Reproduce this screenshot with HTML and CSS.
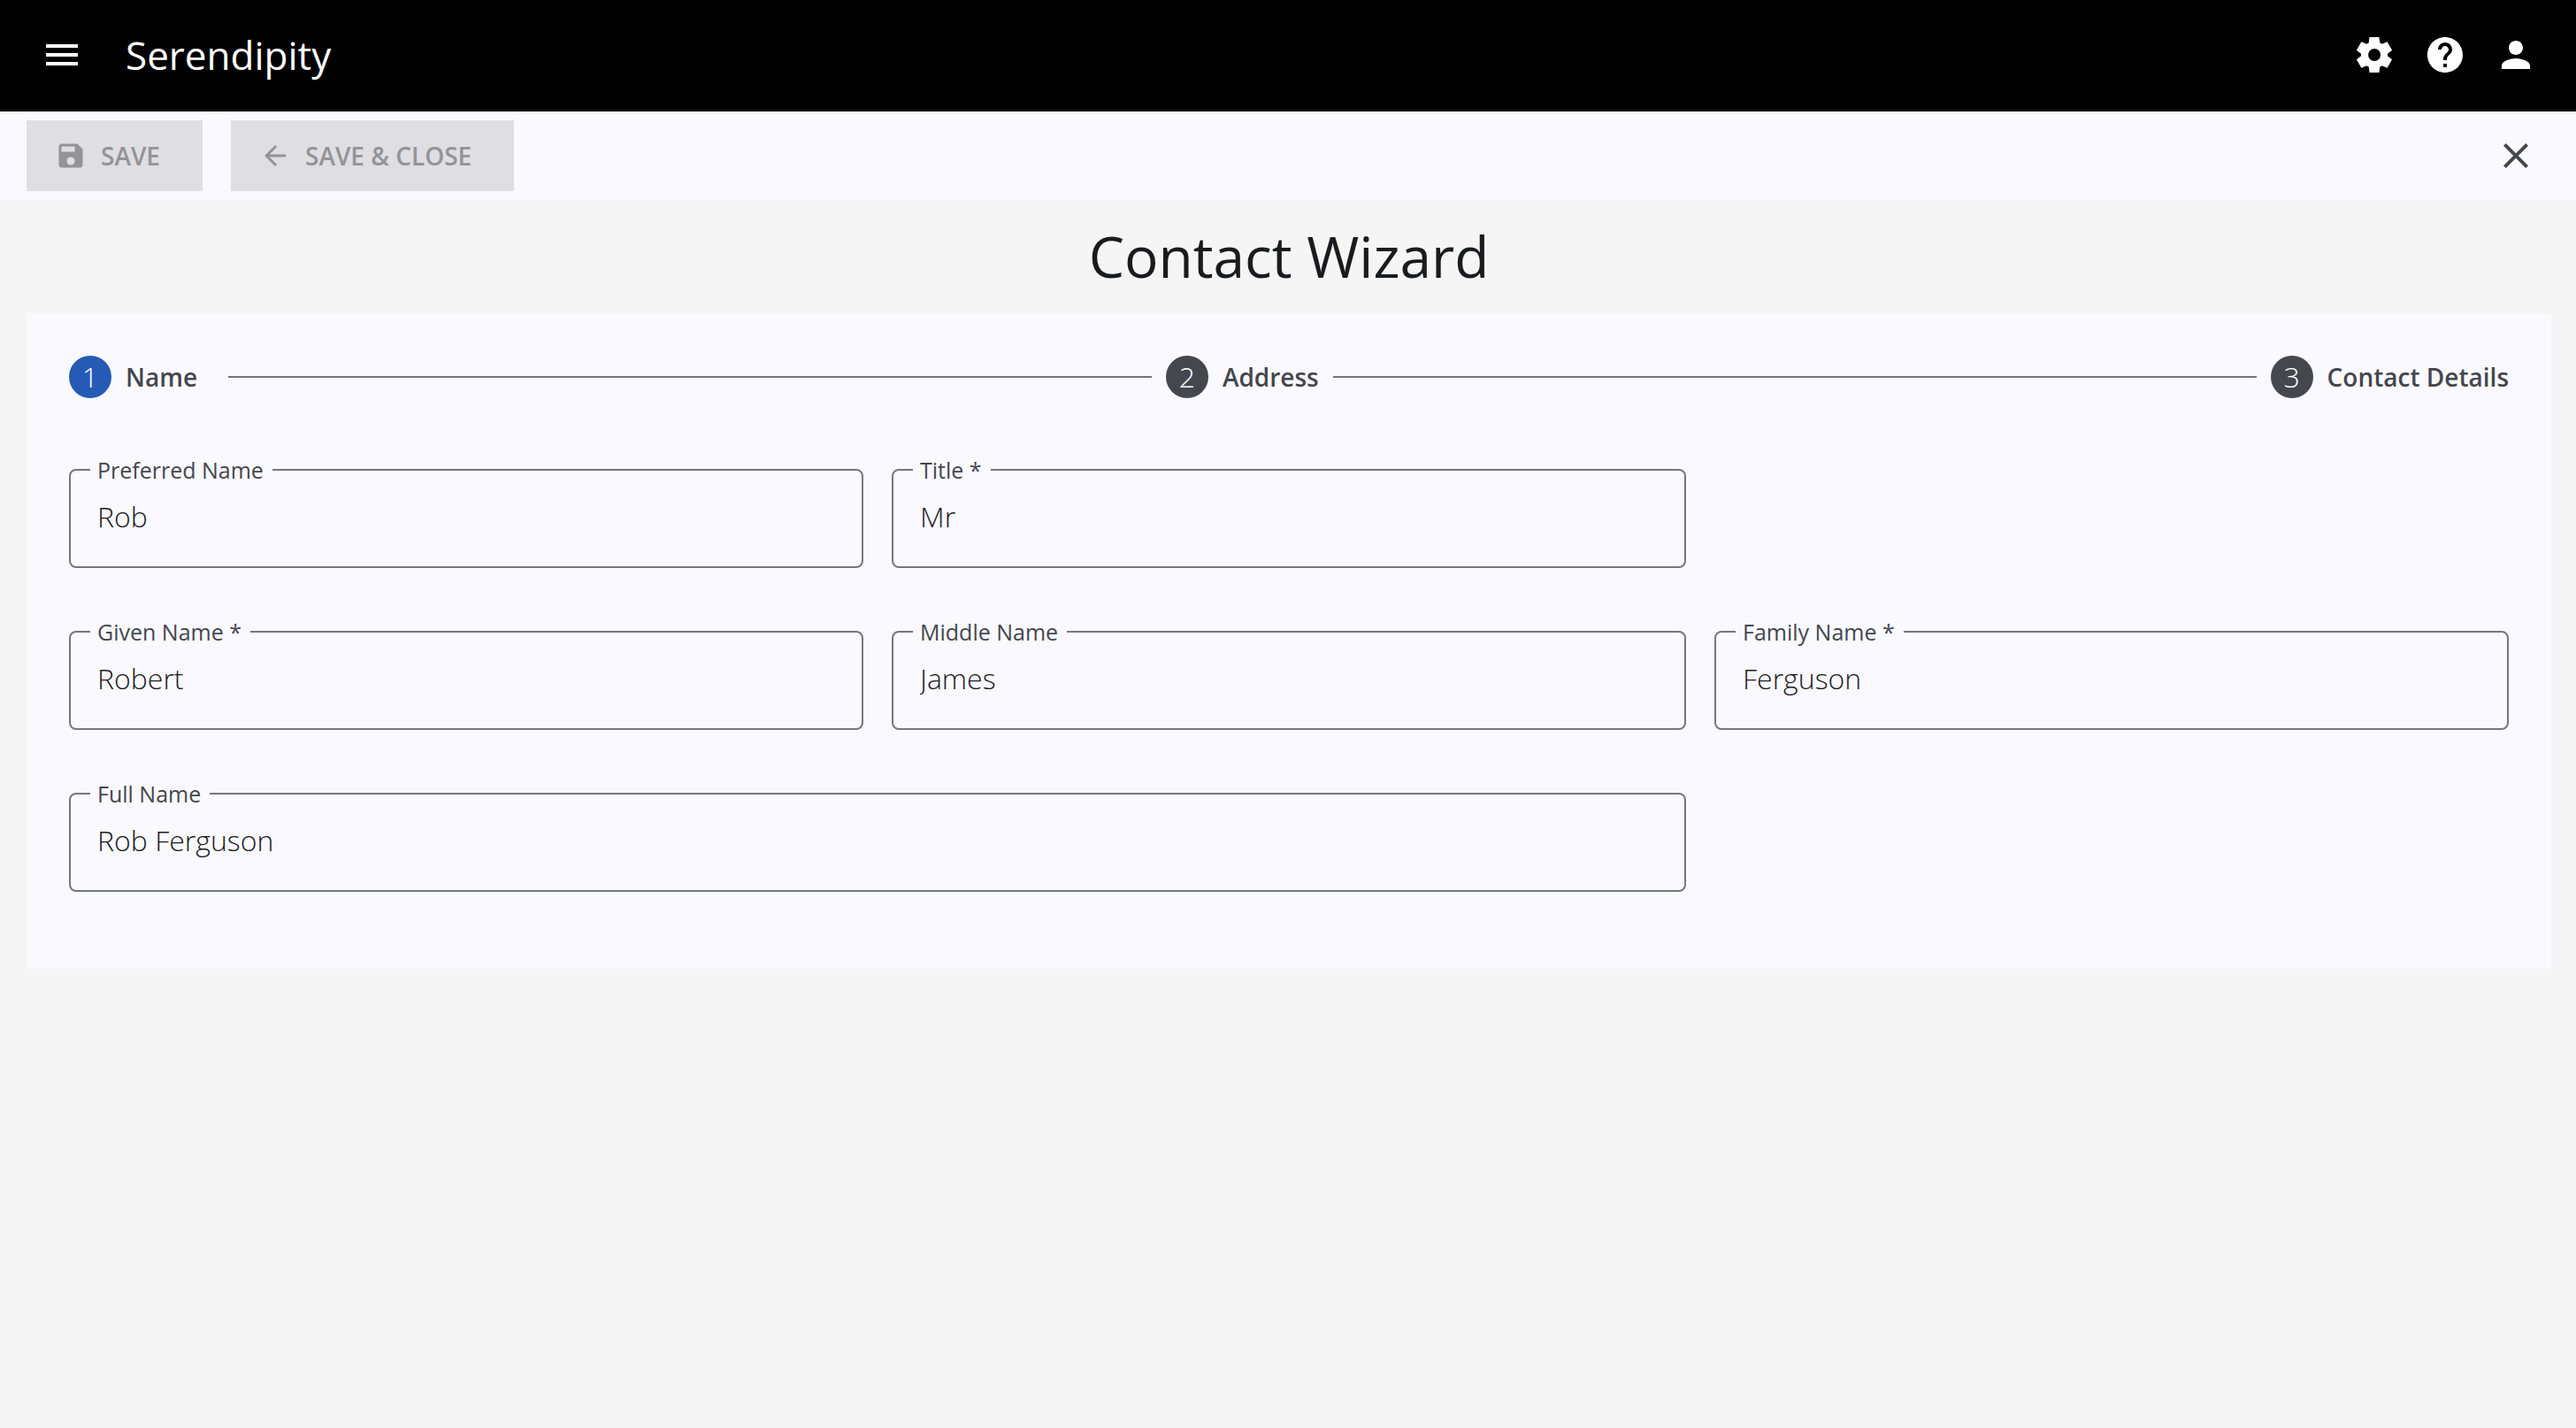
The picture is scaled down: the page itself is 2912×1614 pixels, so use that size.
FILE: index.html
```html
<!DOCTYPE html>
<html lang="en">
<head>
<meta charset="utf-8">
<meta name="viewport" content="width=device-width, initial-scale=1">
<title>Serendipity</title>
<link rel="stylesheet" href="styles.css">
</head>
<body>
<header class="app-bar">
  <button class="icon-button" type="button" aria-label="Menu">
    <svg class="icon" viewBox="0 0 24 24"><path d="M3 18h18v-2H3v2zm0-5h18v-2H3v2zm0-7v2h18V6H3z"/></svg>
  </button>
  <span class="brand">Serendipity</span>
  <nav class="actions">
    <button class="icon-button" type="button" aria-label="Settings">
      <svg class="icon" viewBox="0 0 24 24"><path d="m9.25 22-.4-3.2q-.325-.125-.612-.3-.288-.175-.563-.375L4.7 19.375l-2.75-4.75 2.575-1.95Q4.5 12.5 4.5 12.337v-.675q0-.162.025-.337L1.95 9.375l2.75-4.75 2.975 1.25q.275-.2.575-.375.3-.175.6-.3l.4-3.2h5.5l.4 3.2q.325.125.613.3.287.175.562.375l2.975-1.25 2.75 4.75-2.575 1.95q.025.175.025.337v.675q0 .163-.05.338l2.575 1.95-2.75 4.75-2.95-1.25q-.275.2-.575.375-.3.175-.6.3l-.4 3.2Zm2.8-6.5q1.45 0 2.475-1.025Q15.55 13.45 15.55 12q0-1.45-1.025-2.475Q13.5 8.5 12.05 8.5q-1.475 0-2.488 1.025Q8.55 10.55 8.55 12q0 1.45 1.012 2.475Q10.575 15.5 12.05 15.5Z"/></svg>
    </button>
    <button class="icon-button" type="button" aria-label="Help">
      <svg class="icon" viewBox="0 0 24 24"><path d="M12 2C6.480 2 2 6.480 2 12s4.480 10 10 10 10-4.480 10-10S17.520 2 12 2zm1 17h-2v-2h2v2zm2.070-7.750l-.9.920C13.450 12.900 13 13.500 13 15h-2v-.5c0-1.100.450-2.100 1.170-2.830l1.240-1.260c.370-.360.590-.860.590-1.410 0-1.100-.9-2-2-2s-2 .9-2 2H8c0-2.210 1.790-4 4-4s4 1.790 4 4c0 .880-.360 1.680-.930 2.250z"/></svg>
    </button>
    <button class="icon-button" type="button" aria-label="Account">
      <svg class="icon" viewBox="0 0 24 24"><path d="M12 12c2.210 0 4-1.790 4-4s-1.790-4-4-4-4 1.790-4 4 1.790 4 4 4zm0 2c-2.670 0-8 1.340-8 4v2h16v-2c0-2.660-5.330-4-8-4z"/></svg>
    </button>
  </nav>
</header>

<div class="toolbar">
  <button class="command" type="button" disabled>
    <svg class="command-icon" viewBox="0 0 24 24"><path d="M17 3H5c-1.110 0-2 .9-2 2v14c0 1.100.890 2 2 2h14c1.100 0 2-.9 2-2V7l-4-4zm-5 16c-1.660 0-3-1.340-3-3s1.340-3 3-3 3 1.340 3 3-1.340 3-3 3zm3-10H5V5h10v4z"/></svg>
    SAVE
  </button>
  <button class="command" type="button" disabled>
    <svg class="command-icon" viewBox="0 0 24 24"><path d="M20 11H7.830l5.590-5.590L12 4l-8 8 8 8 1.410-1.410L7.830 13H20v-2z"/></svg>
    SAVE &amp; CLOSE
  </button>
  <button class="icon-button close" type="button" aria-label="Close">
    <svg class="icon" viewBox="0 0 24 24"><path d="M19 6.410L17.590 5 12 10.590 6.410 5 5 6.410 10.590 12 5 17.590 6.410 19 12 13.410 17.590 19 19 17.590 13.410 12z"/></svg>
  </button>
</div>

<main class="page">
  <h1 class="page-title">Contact Wizard</h1>
  <section class="card">
    <ol class="steps">
      <li class="step"><span class="step-number current">1</span><span class="step-label">Name</span></li>
      <li class="step-line" role="presentation"></li>
      <li class="step"><span class="step-number">2</span><span class="step-label">Address</span></li>
      <li class="step-line" role="presentation"></li>
      <li class="step"><span class="step-number">3</span><span class="step-label">Contact Details</span></li>
    </ol>
    <form class="fields">
      <fieldset class="field">
        <legend class="field-legend"><label for="preferred-name">Preferred Name</label></legend>
        <input class="field-input" id="preferred-name" type="text" value="Rob">
      </fieldset>
      <fieldset class="field">
        <legend class="field-legend"><label for="title">Title *</label></legend>
        <input class="field-input" id="title" type="text" value="Mr" required>
      </fieldset>
      <fieldset class="field row-start">
        <legend class="field-legend"><label for="given-name">Given Name *</label></legend>
        <input class="field-input" id="given-name" type="text" value="Robert" required>
      </fieldset>
      <fieldset class="field">
        <legend class="field-legend"><label for="middle-name">Middle Name</label></legend>
        <input class="field-input" id="middle-name" type="text" value="James">
      </fieldset>
      <fieldset class="field">
        <legend class="field-legend"><label for="family-name">Family Name *</label></legend>
        <input class="field-input" id="family-name" type="text" value="Ferguson" required>
      </fieldset>
      <fieldset class="field wide">
        <legend class="field-legend"><label for="full-name">Full Name</label></legend>
        <input class="field-input" id="full-name" type="text" value="Rob Ferguson">
      </fieldset>
    </form>
  </section>
</main>
</body>
</html>
```

FILE: styles.css
```css
* {
  box-sizing: border-box;
}

body {
  margin: 0;
  background: #f5f5f5;
  color: #1a1b1f;
  font-family: "Open Sans", "Noto Sans", sans-serif;
}

button,
input {
  font: inherit;
  color: inherit;
}

.app-bar {
  display: flex;
  align-items: center;
  padding: 38px 44px 40px 46px;
  background: #000;
  color: #fff;
}

.icon-button {
  display: flex;
  padding: 0;
  border: 0;
  background: none;
}

.icon {
  width: 48px;
  height: 48px;
  fill: currentColor;
}

.brand {
  margin-left: 48px;
  font-size: 44px;
  line-height: 48px;
}

.actions {
  display: flex;
  gap: 32px;
  margin-left: auto;
}

.toolbar {
  display: flex;
  align-items: center;
  gap: 32px;
  padding: 10px 44px 10px 30px;
  background: #faf9ff;
}

.command {
  display: flex;
  align-items: center;
  gap: 16px;
  height: 80px;
  padding: 0 48px 0 32px;
  border: 0;
  background: #dfdee3;
  color: #949398;
  font-size: 28px;
  font-weight: 600;
}

.command-icon {
  width: 36px;
  height: 36px;
  fill: currentColor;
}

.close {
  margin-left: auto;
  color: #44474e;
}

.page {
  padding: 0 28px 48px 30px;
}

.page-title {
  margin: 0;
  font-size: 64px;
  font-weight: 400;
  line-height: 128px;
  text-align: center;
}

.card {
  padding: 48px 48px 87px;
  background: #faf9ff;
}

.steps {
  display: flex;
  align-items: center;
  gap: 16px;
  margin: 0 0 63px;
  padding: 0;
  list-style: none;
}

.step {
  display: flex;
  align-items: center;
  gap: 16px;
}

.step-number {
  width: 48px;
  height: 48px;
  border-radius: 50%;
  background: #44474e;
  color: #fff;
  font-size: 32px;
  font-weight: 300;
  line-height: 48px;
  text-align: center;
}

.step-number.current {
  background: #255bb5;
}

.step-label {
  min-width: 100px;
  color: #44474e;
  font-size: 28px;
  font-weight: 600;
}

.step-line {
  flex: 1;
  border-top: 2px solid #74777f;
}

.fields {
  display: grid;
  grid-template-columns: repeat(3, minmax(0, 1fr));
  gap: 54px 32px;
}

.field {
  min-width: 0;
  margin: 0;
  padding: 10px 22px 33px;
  border: 2px solid #74777f;
  border-radius: 8px;
}

.row-start {
  grid-column-start: 1;
}

.wide {
  grid-column: span 2;
}

.field-legend {
  padding: 0 10px 0 8px;
  color: #44474e;
  font-size: 25px;
  line-height: 36px;
}

.field-input {
  display: block;
  width: 100%;
  height: 48px;
  padding: 0 8px;
  border: 0;
  outline: 0;
  background: none;
  font-size: 32px;
  font-weight: 300;
}
```
